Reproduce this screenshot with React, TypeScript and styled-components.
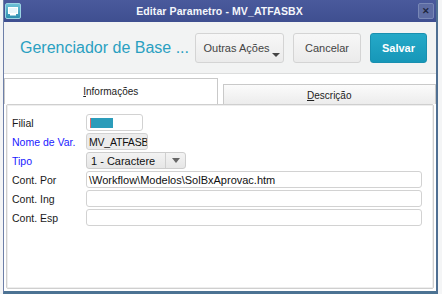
import React from "react";
import styled, { createGlobalStyle } from "styled-components";

const GlobalStyle = createGlobalStyle`
  html, body {
    margin: 0;
    padding: 0;
    background: #f4f5f6;
    font-family: "Liberation Sans", Arial, sans-serif;
  }
`;

const Desktop = styled.div`
  width: 442px;
  height: 294px;
  overflow: hidden;
  padding: 0 4px 0 3px;
  box-sizing: border-box;
`;

const Window = styled.div`
  height: 294px;
  display: flex;
  flex-direction: column;
  border-left: 1px solid #6d7fa8;
  border-right: 2px solid #4f6f92;
  border-bottom: 3px solid #4c7393;
  box-sizing: border-box;
  background: #f2f3f4;
`;

const TitleBar = styled.div`
  height: 22px;
  flex: none;
  display: flex;
  align-items: center;
  padding: 0 2px 0 1px;
  background: linear-gradient(#4a5a9c, #3f4f90);
  color: #fff;
  font-size: 10.5px;
  font-weight: bold;
`;

const AppIcon = styled.div`
  width: 16px;
  height: 16px;
  border-radius: 2px;
  background: linear-gradient(#6ec1d6, #2d8fb0);
  border: 1px solid #9bd4e3;
  box-sizing: border-box;
  display: flex;
  align-items: center;
  justify-content: center;
`;

const TitleText = styled.div`
  flex: 1;
  text-align: center;
  letter-spacing: 0.1px;
  color: #f4f6fb;
`;

const CloseBox = styled.div`
  width: 16px;
  height: 16px;
  border-radius: 2px;
  background: #5d6ca3;
  border: 1px solid #7887b6;
  box-sizing: border-box;
  color: #1f2740;
  font-size: 9px;
  line-height: 14px;
  text-align: center;
`;

const Header = styled.div`
  height: 51px;
  flex: none;
  display: flex;
  align-items: center;
  padding: 0 9px 0 16px;
  background: #f2f3f3;
  border-bottom: 1px solid #dcdddd;
`;

const AppTitle = styled.div`
  flex: 1;
  min-width: 0;
  white-space: nowrap;
  color: #2aa0c1;
  font-size: 16px;
`;

const Button = styled.div<{ $primary?: boolean; $w: number }>`
  position: relative;
  flex: none;
  width: ${(p) => p.$w}px;
  height: 30px;
  margin-left: 9px;
  box-sizing: border-box;
  border-radius: 3px;
  display: flex;
  align-items: center;
  justify-content: center;
  font-size: 11px;
  ${(p) =>
    p.$primary
      ? `background: linear-gradient(#25a9c8, #1797b8);
         border: 1px solid #1990b0;
         color: #fff;
         font-weight: bold;`
      : `background: linear-gradient(#f7f7f7, #ebebeb);
         border: 1px solid #d4d4d4;
         color: #444;`}
`;

const Caret = styled.span`
  position: absolute;
  right: 3px;
  bottom: 5px;
  width: 0;
  height: 0;
  border-left: 4px solid transparent;
  border-right: 4px solid transparent;
  border-top: 4px solid #444;
`;

const Body = styled.div`
  flex: 1;
  background: #fff;
  display: flex;
  flex-direction: column;
  padding: 4px 0 2px 0;
`;

const TabRow = styled.div`
  display: flex;
  align-items: flex-end;
  gap: 5px;
  height: 26px;
`;

const Tab = styled.div<{ $active?: boolean }>`
  flex: 1;
  height: ${(p) => (p.$active ? 26 : 20)}px;
  box-sizing: border-box;
  display: flex;
  align-items: center;
  justify-content: center;
  font-size: 10px;
  color: #222;
  border: 1px solid #c9c9c9;
  border-bottom: none;
  background: ${(p) =>
    p.$active ? "#fff" : "linear-gradient(#fbfbfb, #ececec)"};
  padding-top: ${(p) => (p.$active ? 0 : 1)}px;
  & u {
    text-decoration: underline;
  }
`;

const Panel = styled.div`
  flex: 1;
  margin: 0 2px 0 2px;
  border: 1px solid #cfcfcf;
  box-shadow: inset 0 0 0 1px #eee;
  border-radius: 2px;
  padding: 9px 0 0 5px;
  display: flex;
  flex-direction: column;
  gap: 2px;
`;

const Row = styled.div`
  display: flex;
  align-items: center;
  height: 17px;
`;

const Label = styled.div<{ $required?: boolean }>`
  width: 74px;
  flex: none;
  font-size: 10.5px;
  color: ${(p) => (p.$required ? "#1a1aff" : "#1a1a1a")};
`;

const Field = styled.div<{ $w?: number; $bg?: string; $tight?: boolean }>`
  width: ${(p) => (p.$w ? `${p.$w}px` : "336px")};
  height: 17px;
  box-sizing: border-box;
  border: 1px solid #d2d2d2;
  border-radius: 3px;
  background: ${(p) => p.$bg || "#fff"};
  font-size: ${(p) => (p.$tight ? 10.5 : 11)}px;
  letter-spacing: ${(p) => (p.$tight ? -0.2 : 0)}px;
  color: #111;
  display: flex;
  align-items: center;
  padding-left: 2px;
  overflow: hidden;
  white-space: nowrap;
`;

const Swatch = styled.div`
  width: 22px;
  height: 10px;
  background: #2b9cba;
  border-left: 1px solid #e06a6a;
  margin-left: 1px;
`;

const SelectBox = styled.div`
  width: 100px;
  height: 17px;
  box-sizing: border-box;
  border: 1px solid #cdcdcd;
  border-radius: 3px;
  background: linear-gradient(#f3f3f3, #e6e6e6);
  display: flex;
  font-size: 11px;
  color: #111;
`;

const SelectValue = styled.div`
  flex: 1;
  display: flex;
  align-items: center;
  padding-left: 4px;
  border-right: 1px solid #cfcfcf;
`;

const SelectArrow = styled.div`
  width: 19px;
  display: flex;
  align-items: center;
  justify-content: center;
  &::after {
    content: "";
    border-left: 4px solid transparent;
    border-right: 4px solid transparent;
    border-top: 5px solid #666;
  }
`;

export default function App() {
  return (
    <Desktop>
      <GlobalStyle />
      <Window>
        <TitleBar>
          <AppIcon>
            <svg width="10" height="9" viewBox="0 0 10 9">
              <rect x="0.5" y="0.5" width="9" height="6" fill="#e8f6fa" stroke="#fff" />
              <rect x="2" y="7" width="6" height="1.5" fill="#fff" />
            </svg>
          </AppIcon>
          <TitleText>Editar Parametro - MV_ATFASBX</TitleText>
          <CloseBox>✕</CloseBox>
        </TitleBar>
        <Header>
          <AppTitle>Gerenciador de Base ...</AppTitle>
          <Button $w={89}>
            <span style={{ marginRight: 6 }}>Outras Ações</span>
            <Caret />
          </Button>
          <Button $w={68}>Cancelar</Button>
          <Button $w={57} $primary>
            Salvar
          </Button>
        </Header>
        <Body>
          <TabRow>
            <Tab $active>
              <span>
                <u>I</u>nformações
              </span>
            </Tab>
            <Tab>
              <span>
                <u>D</u>escrição
              </span>
            </Tab>
          </TabRow>
          <Panel>
            <Row>
              <Label>Filial</Label>
              <Field $w={57}>
                <Swatch />
              </Field>
            </Row>
            <Row>
              <Label $required>Nome de Var.</Label>
              <Field $w={62} $bg="#ececec" $tight>
                MV_ATFASB
              </Field>
            </Row>
            <Row>
              <Label $required>Tipo</Label>
              <SelectBox>
                <SelectValue>1 - Caractere</SelectValue>
                <SelectArrow />
              </SelectBox>
            </Row>
            <Row>
              <Label>Cont. Por</Label>
              <Field>\Workflow\Modelos\SolBxAprovac.htm</Field>
            </Row>
            <Row>
              <Label>Cont. Ing</Label>
              <Field />
            </Row>
            <Row>
              <Label>Cont. Esp</Label>
              <Field />
            </Row>
          </Panel>
        </Body>
      </Window>
    </Desktop>
  );
}
